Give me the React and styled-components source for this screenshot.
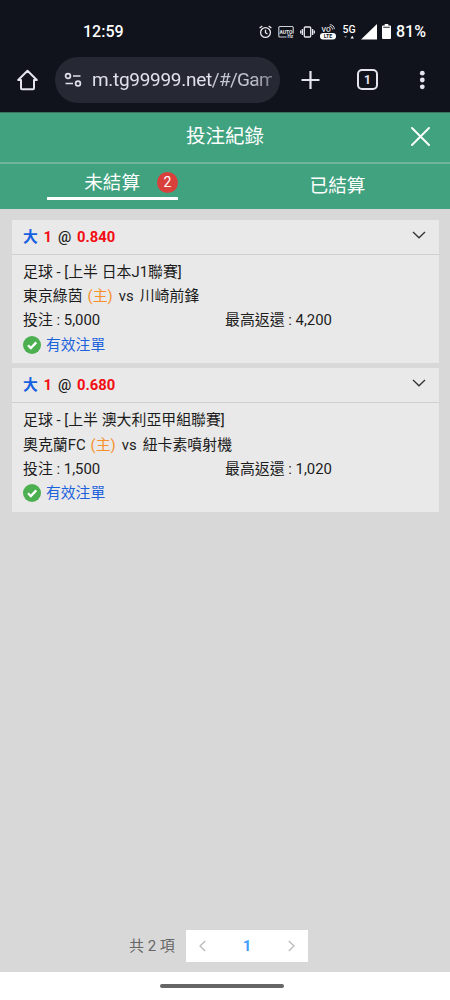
import React from 'react';
import styled, { createGlobalStyle } from 'styled-components';

const GlobalStyle = createGlobalStyle`
  * { box-sizing: border-box; }
  body {
    margin: 0;
    background: #fff;
    font-family: Roboto, 'Noto Sans CJK TC', sans-serif;
    color: #1c1c1c;
  }
  button { font: inherit; color: inherit; background: none; border: 0; padding: 0; }
  svg { display: block; flex: none; }
`;

const Screen = styled.div`
  display: flex;
  flex-direction: column;
  width: 450px;
  height: 1000px;
  overflow: hidden;
`;

const StatusBar = styled.div`
  display: flex;
  justify-content: space-between;
  align-items: center;
  flex: none;
  height: 50px;
  padding: 13px 24px 0 83px;
  background: #11131c;
  color: #fff;
  font-size: 16px;
  font-weight: 500;
`;

const Clock = styled.span`
  letter-spacing: 0;
`;

const StatusIcons = styled.div`
  display: flex;
  align-items: center;
  width: 167px;
`;

const IconSlot = styled.div`
  width: ${(p) => p.$w}px;
  flex: none;
`;

const Network = styled.div`
  display: flex;
  flex-direction: column;
  align-items: center;
  flex: none;
  width: 14px;
  margin-right: 5px;
  font-size: 10.5px;
  line-height: 10px;
`;

const Battery = styled.span`
  letter-spacing: 0;
`;

const Toolbar = styled.div`
  display: flex;
  align-items: center;
  flex: none;
  height: 62px;
  padding: 0 21px 3px 17px;
  background: #11131c;
  color: #e3e4ec;
`;

const AddressPill = styled.div`
  display: flex;
  align-items: center;
  width: 225px;
  height: 46px;
  margin-left: 16px;
  padding: 0 8px;
  border-radius: 23px;
  background: #262834;
`;

const Url = styled.span`
  width: 180px;
  margin-left: 10px;
  overflow: hidden;
  white-space: nowrap;
  font-size: 19px;
  line-height: 28px;
  letter-spacing: -0.3px;
  color: #c3c5d1;
  mask-image: linear-gradient(90deg, #000 88%, rgba(0, 0, 0, 0.55));
`;

const Host = styled.span`
  color: #dfe0ea;
`;

const Path = styled.span`
  letter-spacing: -0.7px;
`;

const ToolbarActions = styled.div`
  display: flex;
  align-items: center;
  margin-left: 20px;
`;

const TabCount = styled.div`
  display: grid;
  place-items: center;
  width: 21px;
  height: 21px;
  margin: 0 41px 0 37px;
  border: 2px solid #e3e4ec;
  border-radius: 5px;
  font-size: 12px;
  font-weight: 700;
  line-height: 1;
`;

const PageHeader = styled.header`
  display: grid;
  grid-template-columns: 1fr auto 1fr;
  align-items: center;
  flex: none;
  height: 52px;
  padding: 0 20px 1px;
  border-top: 1px solid #39745f;
  border-bottom: 2px solid #70b49a;
  background: #41a280;
  color: #fff;
`;

const Title = styled.h1`
  grid-column: 2;
  margin: 0;
  font-size: 19.5px;
  font-weight: 400;
  line-height: 28px;
`;

const CloseButton = styled.button`
  justify-self: end;
  padding-bottom: 2px;
`;

const Tabs = styled.nav`
  display: grid;
  grid-template-columns: 1fr 1fr;
  justify-items: center;
  flex: none;
  height: 45px;
  background: #41a280;
  color: #fff;
  font-size: 18.6px;
  line-height: 28px;
`;

const Tab = styled.button`
  display: flex;
  align-items: center;
  justify-content: ${(p) => (p.$active ? 'flex-end' : 'center')};
  width: 131px;
  height: ${(p) => (p.$active ? '36px' : '44px')};
  padding-top: ${(p) => (p.$active ? '4px' : '0')};
  border-bottom: ${(p) => (p.$active ? '3px solid #fff' : '0')};
`;

const Badge = styled.span`
  display: grid;
  place-items: center;
  width: 21px;
  height: 21px;
  margin: 0 0 1px 17px;
  border-radius: 50%;
  background: #d9403b;
  font-size: 14px;
  line-height: 1;
`;

const Content = styled.main`
  display: flex;
  flex-direction: column;
  flex: 1;
  gap: 5px;
  padding: 11px 11px 10px 12px;
  background: #d8d8d8;
`;

const Card = styled.article`
  height: 143.4px;
  background: #e9e9e9;
  font-size: 14.9px;
`;

const CardHeader = styled.div`
  display: flex;
  align-items: center;
  justify-content: space-between;
  height: 34.5px;
  padding: 0 13px 0 11px;
  border-bottom: 1px solid #cfcfcf;
  font-weight: 500;
`;

const Odds = styled.div`
  display: flex;
  gap: 5.8px;
  font-size: 14.8px;
  line-height: 24px;
`;

const Pick = styled.b`
  color: #1560e0;
`;

const Red = styled.b`
  color: #f30d12;
`;

const ChevronSlot = styled.div`
  padding-bottom: 4px;
`;

const CardBody = styled.div`
  padding: 5.5px 11px 0;
`;

const Line = styled.div`
  display: flex;
  height: 24.2px;
  line-height: 24.2px;
  white-space: pre;
`;

const Home = styled.span`
  margin: 0 6px 0 5px;
  color: #f7902d;
`;

const Versus = styled.span`
  margin-right: 6px;
`;

const Stake = styled.span`
  width: 202px;
`;

const Valid = styled.div`
  display: flex;
  align-items: center;
  gap: 5px;
  height: 25px;
  color: #1b62dc;
`;

const ValidLabel = styled.span`
  font-size: 14.8px;
  line-height: 22px;
  padding-bottom: 1px;
`;

const Pagination = styled.footer`
  display: flex;
  align-items: center;
  gap: 12px;
  margin: auto 0 0 117px;
  color: #666;
  font-size: 15px;
`;

const Total = styled.span`
  width: 45px;
  padding-bottom: 3px;
  white-space: nowrap;
`;

const Pager = styled.div`
  display: flex;
  align-items: center;
  justify-content: space-between;
  width: 122px;
  height: 32px;
  padding: 0 12px;
  background: #fff;
  color: #b9b9b9;
`;

const Current = styled.b`
  color: #409eff;
`;

const GestureBar = styled.div`
  display: flex;
  justify-content: center;
  flex: none;
  height: 28px;
  padding: 12px 6px 0 0;
  background: #fff;
`;

const Handle = styled.div`
  width: 124px;
  height: 4px;
  border-radius: 2px;
  background: #666;
`;

const AlarmIcon = () => (
  <svg width="13" height="14" viewBox="0 0 13 14" fill="none" stroke="#e8e8ec" strokeWidth="1.3">
    <circle cx="6.5" cy="7.5" r="4.9" />
    <path d="M.6 3 3.3.9M12.4 3 9.7.9M6.5 4.7v3l2 1.3" />
  </svg>
);

const AutoIcon = () => (
  <svg width="16" height="14" viewBox="0 0 16 14">
    <path d="M8.500 12H1.800a1 1 0 0 1-1-1V2.500a1 1 0 0 1 1-1h12.400a1 1 0 0 1 1 1V8.500" fill="none" stroke="#cfd0d6" strokeWidth="1.1" />
    <text x="8" y="8.500" textAnchor="middle" fontSize="5" fontWeight="700" fill="#e8e8ec">AUTO</text>
    <text x="12.200" y="13.300" textAnchor="middle" fontSize="4.5" fontWeight="700" fill="#e8e8ec">Hz</text>
  </svg>
);

const VibrateIcon = () => (
  <svg width="15" height="12" viewBox="0 0 15 12" fill="none" stroke="#e8e8ec" strokeWidth="1.3">
    <rect x="4.3" y="1" width="6.4" height="10" rx="1" />
    <path d="M2.4 3v6M12.6 3v6M.7 4.5v3M14.3 4.5v3" />
  </svg>
);

const VolteIcon = () => (
  <svg width="16" height="16" viewBox="0 0 16 16">
    <text x="6.200" y="8" textAnchor="middle" fontSize="7" fontWeight="500" fill="#e8e8ec">VO</text>
    <path d="M9.5 2.3c2 0 3 1.6 3 3.2M9.8.7c3 0 4.5 2 4.5 4.5" fill="none" stroke="#e8e8ec" strokeWidth=".9" />
    <rect x="0" y="9" width="16" height="6.4" rx="3.2" fill="#fff" />
    <text x="8" y="14.1" textAnchor="middle" fontSize="5.3" fontWeight="700" fill="#11131c">LTE</text>
  </svg>
);

const DataArrows = () => (
  <svg width="10" height="4" viewBox="0 0 10 4">
    <path d="M0 1h3L1.5 3z" fill="#777a84" />
    <path d="M6.5 3.5h3.4L8.2.8z" fill="#fff" />
  </svg>
);

const SignalIcon = () => (
  <svg width="16" height="16" viewBox="0 0 16 16"><path d="M16 0v15.500H0z" fill="#fff" /></svg>
);

const BatteryIcon = () => (
  <svg width="9" height="15" viewBox="0 0 9 15">
    <path d="M2.700 0h3.600v1.500H8a1 1 0 0 1 1 1V14a1 1 0 0 1-1 1H1a1 1 0 0 1-1-1V2.500a1 1 0 0 1 1-1h1.700z" fill="#fff" />
    <path d="M1.300 2.700h6.400v1.300H1.300z" fill="#555862" />
  </svg>
);

const HomeIcon = () => (
  <svg width="22" height="22" viewBox="0 0 22 22" fill="none" stroke="#e3e4ec" strokeWidth="2" strokeLinejoin="round">
    <path d="M1.200 11 10.500 1.700 19.800 11h-2.800v8.200a1 1 0 0 1-1 1h-11a1 1 0 0 1-1-1V11z" />
  </svg>
);

const SiteIcon = () => (
  <svg width="19" height="16" viewBox="0 0 19 16" fill="none" stroke="#dfe0ea" strokeWidth="1.700">
    <circle cx="5" cy="4" r="2.400" />
    <path d="M10 4h7.500M2.500 11.500h7.500" />
    <circle cx="15" cy="11.500" r="2.400" />
  </svg>
);

const PlusIcon = () => (
  <svg width="20" height="20" viewBox="0 0 20 20" stroke="#e3e4ec" strokeWidth="2.200">
    <path d="M10.500 1v18M1.500 10h18" />
  </svg>
);

const MoreIcon = () => (
  <svg width="6" height="20" viewBox="0 0 6 20" fill="#e3e4ec">
    <circle cx="3.300" cy="3.200" r="2.400" />
    <circle cx="3.300" cy="10" r="2.400" />
    <circle cx="3.300" cy="16.800" r="2.400" />
  </svg>
);

const CloseIcon = () => (
  <svg width="19" height="19" viewBox="0 0 19 19" stroke="#fff" strokeWidth="1.900" strokeLinecap="round">
    <path d="m1 1 17 17M18 1 1 18" />
  </svg>
);

const ChevronDown = () => (
  <svg width="14" height="8" viewBox="0 0 14 8" fill="none" stroke="#333" strokeWidth="1.300">
    <path d="m1 1 6 5.800L13 1" />
  </svg>
);

const PageArrow = ({ d }) => (
  <svg width="9" height="12" viewBox="0 0 9 12" fill="none" stroke="currentColor" strokeWidth="1.300">
    <path d={d} />
  </svg>
);

const CheckIcon = () => (
  <svg width="18" height="18" viewBox="0 0 18 18">
    <circle cx="9" cy="9" r="9" fill="#4caf50" />
    <path d="m5 9.200 2.800 2.800 5.500-5.600" fill="none" stroke="#fff" strokeWidth="2.300" />
  </svg>
);

const bets = [
  { odds: '0.840', league: '足球 - [上半 日本J1聯賽]', home: '東京綠茵', away: '川崎前鋒', stake: '5,000', payout: '4,200' },
  { odds: '0.680', league: '足球 - [上半 澳大利亞甲組聯賽]', home: '奧克蘭FC', away: '紐卡素噴射機', stake: '1,500', payout: '1,020' },
];

const BetCard = ({ bet }) => (
  <Card>
    <CardHeader>
      <Odds><Pick>大</Pick><Red>1</Red><span>@</span><Red>{bet.odds}</Red></Odds>
      <ChevronSlot><ChevronDown /></ChevronSlot>
    </CardHeader>
    <CardBody>
      <Line>{bet.league}</Line>
      <Line><span>{bet.home}</span><Home>(主)</Home><Versus>vs</Versus><span>{bet.away}</span></Line>
      <Line><Stake>投注 : {bet.stake}</Stake><span>最高返還 : {bet.payout}</span></Line>
      <Valid><CheckIcon /><ValidLabel>有效注單</ValidLabel></Valid>
    </CardBody>
  </Card>
);

export default function App() {
  return (
    <Screen>
      <GlobalStyle />
      <StatusBar>
        <Clock>12:59</Clock>
        <StatusIcons>
          <IconSlot $w={19}><AlarmIcon /></IconSlot>
          <IconSlot $w={22}><AutoIcon /></IconSlot>
          <IconSlot $w={20}><VibrateIcon /></IconSlot>
          <IconSlot $w={22}><VolteIcon /></IconSlot>
          <Network>5G<DataArrows /></Network>
          <IconSlot $w={21}><SignalIcon /></IconSlot>
          <IconSlot $w={14}><BatteryIcon /></IconSlot>
          <Battery>81%</Battery>
        </StatusIcons>
      </StatusBar>
      <Toolbar>
        <HomeIcon />
        <AddressPill>
          <SiteIcon />
          <Url><Host>m.tg99999.net</Host><Path>/#/Gam</Path></Url>
        </AddressPill>
        <ToolbarActions>
          <PlusIcon />
          <TabCount>1</TabCount>
          <MoreIcon />
        </ToolbarActions>
      </Toolbar>
      <PageHeader>
        <Title>投注紀錄</Title>
        <CloseButton aria-label="關閉"><CloseIcon /></CloseButton>
      </PageHeader>
      <Tabs>
        <Tab $active>未結算<Badge>2</Badge></Tab>
        <Tab>已結算</Tab>
      </Tabs>
      <Content>
        {bets.map((bet) => <BetCard key={bet.odds} bet={bet} />)}
        <Pagination>
          <Total>共 2 項</Total>
          <Pager>
            <PageArrow d="M7.200 1 2 6l5.200 5" />
            <Current>1</Current>
            <PageArrow d="M1.800 1 7 6l-5.200 5" />
          </Pager>
        </Pagination>
      </Content>
      <GestureBar><Handle /></GestureBar>
    </Screen>
  );
}
